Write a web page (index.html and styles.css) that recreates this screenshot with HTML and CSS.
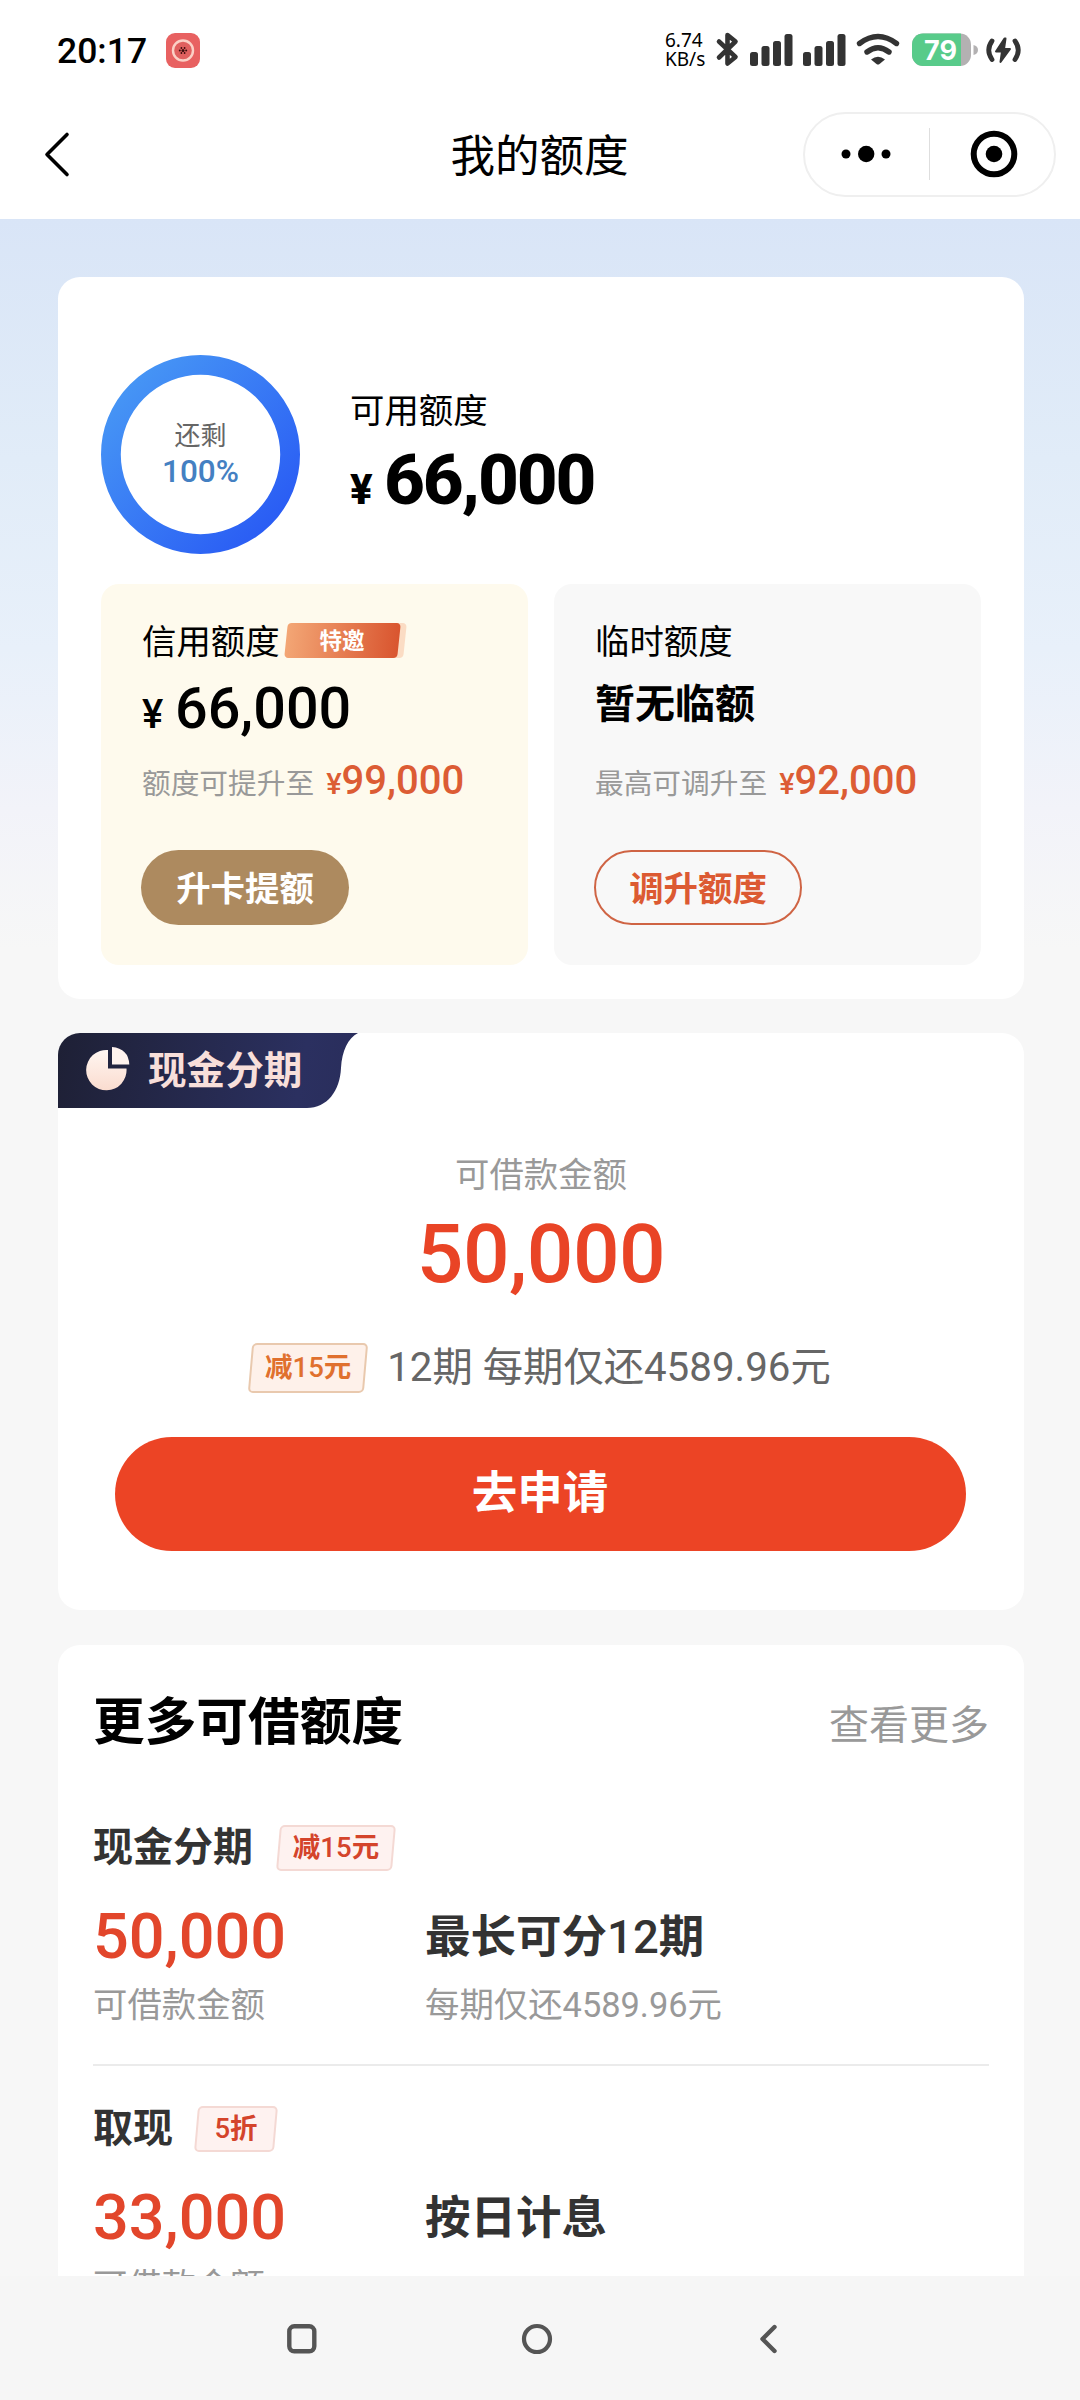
FILE: index.html
```html
<!DOCTYPE html>
<html lang="zh-CN">
<head>
<meta charset="utf-8">
<title>我的额度</title>
<link rel="stylesheet" href="styles.css">
</head>
<body>
<div class="phone">
  <header class="top">
    <div class="status">
      <span class="clock">20:17</span>
      <svg class="app-badge" width="34" height="35" viewBox="0 0 34 35">
        <rect width="34" height="35" rx="9" fill="#e86161"/>
        <circle cx="17" cy="17.5" r="10" fill="#e0605f" stroke="#fbd0c6" stroke-width="2.4"/>
        <g fill="#3a0d0d"><circle cx="17" cy="17.5" r="1.5"/><circle cx="13.8" cy="17.5" r="1"/><circle cx="20.2" cy="17.5" r="1"/><circle cx="15.4" cy="15" r=".9"/><circle cx="18.6" cy="15" r=".9"/><circle cx="15.4" cy="20" r=".9"/><circle cx="18.6" cy="20" r=".9"/></g>
      </svg>
      <div class="net"><span>6.74</span><span>KB/s</span></div>
      <svg class="sys" width="310" height="40" viewBox="714 29 310 40">
        <path d="M719 41.500L735.500 57L727.500 63.500V35L735.500 41.500L719 57.500" fill="none" stroke="#333" stroke-width="4.600" stroke-linecap="round" stroke-linejoin="round"/>
        <g fill="#333">
          <rect x="750" y="52" width="8" height="14" rx="2.500"/><rect x="761.500" y="46" width="8" height="20" rx="2.500"/><rect x="773" y="41" width="8" height="25" rx="2.500"/><rect x="784.500" y="34" width="8" height="32" rx="2.500"/>
          <rect x="803" y="52" width="8" height="14" rx="2.500"/><rect x="814.500" y="46" width="8" height="20" rx="2.500"/><rect x="826" y="41" width="8" height="25" rx="2.500"/><rect x="837.500" y="34" width="8" height="32" rx="2.500"/>
          <path d="M871 59.500Q878 54 885 59.500L879.500 64Q878 65 876.500 64Z"/>
        </g>
        <g fill="none" stroke="#333" stroke-width="5.400" stroke-linecap="round"><path d="M859.500 43.500Q878 29.500 896.500 43.500"/><path d="M867 52Q878 43.500 889 52"/></g>
        <clipPath id="cell"><rect x="912" y="33.500" width="59" height="32.500" rx="11"/></clipPath>
        <g clip-path="url(#cell)"><rect x="912" y="33" width="59" height="34" fill="#b3b1b2"/><rect x="912" y="33" width="49" height="34" fill="#58cb8a"/></g>
        <path d="M973.500 45Q978 46 978 50T973.500 55Z" fill="#b3b1b2"/>
        <text x="940.500" y="59.500" text-anchor="middle" class="pct">79</text>
        <path d="M1004.500 38.500L996 51.500H1002L1000.500 62L1010 49H1004L1005.500 38.500Z" fill="#333" stroke="#333" stroke-width="2" stroke-linejoin="round"/>
        <path d="M992 41Q985.500 50 992 59.500M1015 41Q1021.500 50 1015 59.500" fill="none" stroke="#333" stroke-width="4.800" stroke-linecap="round"/>
      </svg>
    </div>
    <div class="titlebar">
      <svg class="back" width="30" height="48" viewBox="43 130 30 48"><path d="M68 134.500L48 154.500L68 174.500" fill="none" stroke="#000" stroke-width="3.600" stroke-linecap="round" stroke-linejoin="round"/></svg>
      <h1 class="title">我的额度</h1>
      <div class="capsule">
        <svg width="50" height="20" viewBox="0 0 50 20"><circle cx="5" cy="10" r="4.500"/><circle cx="25.200" cy="10" r="8.200"/><circle cx="45" cy="10" r="4.500"/></svg>
        <i class="bar"></i>
        <svg width="48" height="48" viewBox="0 0 48 48"><circle cx="24" cy="24" r="20.300" fill="none" stroke="#000" stroke-width="6"/><circle cx="24" cy="24" r="8.300"/></svg>
      </div>
    </div>
  </header>

  <main class="content">
    <section class="card quota">
      <div class="overview">
        <div class="ring">
          <svg class="ring-art" width="199" height="199" viewBox="0 0 199 199">
            <defs><linearGradient id="blue" x1="0" y1=".15" x2=".9" y2="1"><stop offset="0" stop-color="#4797f5"/><stop offset="1" stop-color="#2859f4"/></linearGradient></defs>
            <circle cx="99.500" cy="99.500" r="89.600" fill="none" stroke="url(#blue)" stroke-width="19.800"/>
          </svg>
          <span class="ring-label">还剩</span>
          <span class="ring-value">100%</span>
        </div>
        <div class="available">
          <div class="label">可用额度</div>
          <div class="total"><span class="yen">¥</span><strong>66,000</strong></div>
        </div>
      </div>
      <div class="limits">
        <div class="limit gold">
          <div class="label">信用额度<span class="ribbon"><b>特邀</b></span></div>
          <div class="sum"><span class="yen">¥</span>66,000</div>
          <div class="raise">额度可提升至<span class="yen">¥</span><em>99,000</em></div>
          <button class="pill solid">升卡提额</button>
        </div>
        <div class="limit grey">
          <div class="label">临时额度</div>
          <div class="none">暂无临额</div>
          <div class="raise">最高可调升至<span class="yen">¥</span><em>92,000</em></div>
          <button class="pill line">调升额度</button>
        </div>
      </div>
    </section>

    <section class="card cash">
      <div class="tab">
        <svg width="44" height="44" viewBox="0 0 44 44">
          <defs><linearGradient id="rose" x1="0" y1="0" x2="0" y2="1"><stop offset="0" stop-color="#fff6f1"/><stop offset="1" stop-color="#fadccf"/></linearGradient></defs>
          <path d="M22 3V21.500H40.500A20.200 20.200 0 1 1 22 3Z" fill="url(#rose)"/>
          <path d="M26 0Q42.500 1.500 43.300 17.500H26Z" fill="#fff3ee"/>
        </svg>
        <span>现金分期</span>
      </div>
      <div class="cash-label">可借款金额</div>
      <div class="cash-sum">50,000</div>
      <div class="plan"><span class="coupon amber">减<i>15</i>元</span><span>12期 每期仅还4589.96元</span></div>
      <button class="apply">去申请</button>
    </section>

    <section class="card more">
      <div class="more-head"><h2>更多可借额度</h2><a class="see">查看更多</a></div>
      <article class="offer">
        <div class="offer-name">现金分期<span class="coupon">减<i>15</i>元</span></div>
        <div class="offer-main"><span class="offer-sum">50,000</span><span class="offer-term">最长可分<i>12</i>期</span></div>
        <div class="offer-note"><span>可借款金额</span><span>每期仅还4589.96元</span></div>
      </article>
      <article class="offer">
        <div class="offer-name">取现<span class="coupon short"><i>5</i>折</span></div>
        <div class="offer-main"><span class="offer-sum">33,000</span><span class="offer-term">按日计息</span></div>
        <div class="offer-note"><span>可借款金额</span></div>
      </article>
    </section>
  </main>

  <nav class="nav">
    <svg width="30" height="30" viewBox="0 0 30 30"><rect x="2.300" y="2.300" width="25" height="25" rx="5" fill="none" stroke="#555" stroke-width="4.400"/></svg>
    <svg width="32" height="32" viewBox="0 0 32 32"><circle cx="16" cy="16" r="13" fill="none" stroke="#555" stroke-width="4.200"/></svg>
    <svg width="20" height="30" viewBox="0 0 20 30"><path d="M15.500 3L3.500 15L15.500 27" fill="none" stroke="#555" stroke-width="4.400" stroke-linecap="round" stroke-linejoin="round"/></svg>
  </nav>
</div>
</body>
</html>
```

FILE: styles.css
```css
* { box-sizing: border-box; }
body { margin: 0; font-family: Roboto, "Noto Sans CJK SC", sans-serif; color: #000; }
h1, h2 { margin: 0; }
em, i { font-style: normal; }
button { font-family: inherit; border: 0; margin: 0; padding: 0; display: block; }
svg { display: block; flex: none; }

.phone { width: 1080px; height: 2400px; display: flex; flex-direction: column; overflow: hidden; background: #f7f7f7; }

.top { height: 219px; flex: none; background: #fff; }
.status { height: 98px; padding: 0 56px 0 57px; display: flex; align-items: flex-start; }
.clock { font-size: 35.500px; font-weight: 500; line-height: 40px; margin-top: 31px; width: 109px; }
.app-badge { margin-top: 33px; }
.net { margin: 31px 0 0 465px; width: 49px; display: flex; flex-direction: column; font-size: 19px; line-height: 19px; font-family: "Noto Sans", sans-serif; }
.sys { margin-top: 29px; }
.pct { font: 700 27px Inter, sans-serif; fill: #fff; }

.titlebar { height: 112px; padding: 0 24px 0 42px; display: grid; grid-template-columns: 1fr auto 1fr; align-items: center; }
.title { font-size: 44.500px; font-weight: 400; line-height: 56px; margin-left: -19px; margin-top: 5px; }
.capsule { justify-self: end; width: 253px; height: 85px; border: 2px solid #efefef; border-radius: 43px; display: flex; align-items: center; padding: 0 33px 0 36px; }
.bar { width: 1px; height: 52px; background: #dedede; margin: 0 40px 0 38px; }

.content { flex: 1; min-height: 0; overflow: hidden; padding: 58px 56px 0 58px; background: linear-gradient(#d9e5f7 0, #e1ecf8 240px, #e8f0fa 430px, #f2f3f9 590px, #f7f7f7 730px); }
.card { background: #fff; border-radius: 22px; }

.quota { height: 722px; padding: 78px 43px 0; }
.overview { display: flex; gap: 50px; }
.ring { position: relative; width: 199px; height: 199px; display: flex; flex-direction: column; align-items: center; justify-content: center; line-height: 35px; padding-bottom: 1px; }
.ring-art { position: absolute; left: 0; top: 0; }
.ring-label { font-size: 26px; color: #666; }
.ring-value { font-size: 31.500px; font-weight: 500; color: #4480c2; }
.available { padding-top: 36px; }
.label { font-size: 34.400px; line-height: 40px; }
.total { margin-top: 13px; display: flex; align-items: baseline; }
.total .yen { font-size: 42px; line-height: 42px; width: 34px; font-weight: 800; }
.total strong { font-size: 71px; line-height: 72px; letter-spacing: -2.100px; font-weight: 800; }

.limits { margin-top: 30px; display: flex; justify-content: space-between; }
.limit { width: 427px; height: 381px; border-radius: 18px; padding: 38px 0 0 40px; }
.label, .sum, .none, .raise { margin-left: 1px; }
.available .label { margin-left: 0; }
.gold { background: #fefaed; }
.grey { background: #f8f8f8; }
.gold .label { display: flex; align-items: center; }
.ribbon { position: relative; z-index: 0; margin-left: 6px; width: 113px; height: 35px; display: flex; align-items: center; justify-content: center; font-size: 22.500px; line-height: 32px; color: #fff; margin-top: -3px; }
.ribbon::before, .ribbon::after { content: ""; position: absolute; inset: 0; border-radius: 4px; transform: skewX(-6deg); }
.ribbon::before { background: #fbdcc4; left: 8px; right: -6px; z-index: -2; }
.ribbon::after { background: linear-gradient(90deg, #f3a675, #d9552f); z-index: -1; }
.sum { margin-top: 17px; display: flex; align-items: baseline; font-size: 57.500px; line-height: 60px; font-weight: 500; }
.sum .yen { font-size: 40px; line-height: 40px; width: 33px; }
.none { margin-top: 18px; height: 59px; font-size: 40px; line-height: 50px; font-weight: 700; }
.raise { margin-top: 22px; height: 40px; display: flex; align-items: baseline; font-size: 28.700px; line-height: 40px; color: #999; }
.raise .yen { font-size: 29px; font-weight: 500; margin-left: 12px; color: #dc5c34; }
.raise em { font-size: 40px; font-weight: 500; color: #dc5c34; }
.pill { margin-top: 49px; width: 208px; height: 75px; border-radius: 38px; font-size: 34.400px; line-height: 40px; font-weight: 700; padding-top: 3px; }
.solid { background: #ad8a5f; color: #fff; }
.line { border: 2px solid #cf6444; background: none; color: #dc5a32; }

.cash { margin-top: 34px; height: 577px; overflow: hidden; display: flex; flex-direction: column; align-items: center; }
.tab { align-self: flex-start; width: 300px; height: 75px; flex: none; display: flex; align-items: center; gap: 18px; padding-left: 28px; color: #f8dfda; font-size: 38.600px; line-height: 44px; font-weight: 700; background: linear-gradient(100deg, #1e2035, #2b3060 80%, #292d5b); clip-path: path("M0 0H300C290 5 284 18 283 35C282 58 269 75 249 75H0Z"); }
.tab svg { margin-top: -3px; }
.cash-label { margin-top: 45px; font-size: 34.400px; line-height: 44px; color: #999; }
.cash-sum { margin-top: 15px; font-size: 82px; line-height: 84px; font-weight: 500; color: #e94426; letter-spacing: -.500px; }
.plan { margin-top: 47px; height: 50px; display: flex; align-items: center; gap: 19px; font-size: 40.300px; line-height: 50px; color: #666; margin-left: -3px; }
.coupon { position: relative; z-index: 0; width: 120px; height: 46px; display: inline-flex; align-items: center; justify-content: center; font-size: 27.500px; line-height: 40px; padding-bottom: 1px; font-weight: 700; color: #d4442b; }
.coupon i, .offer-term i { font-weight: 500; }
.coupon::before { content: ""; position: absolute; inset: 0 2px; z-index: -1; border: 2px solid #f4d9d4; border-radius: 5px; background: #fef2f0; transform: skewX(-5deg); }
.coupon.amber { height: 50px; color: #e0702e; }
.coupon.amber::before { border-color: #e9c9ae; background: #fef1ea; }
.coupon.short { width: 84px; margin-left: -2px; }
.apply { margin: 44px 2px 0 0; width: 851px; height: 114px; border-radius: 57px; background: #ec4425; color: #fff; font-size: 45.500px; line-height: 60px; font-weight: 700; }

.more { margin-top: 35px; height: 800px; padding: 48px 35px 0 35px; }
.more-head { display: flex; justify-content: space-between; align-items: center; height: 60px; }
h2 { font-size: 51.700px; font-weight: 700; line-height: 60px; }
.see { font-size: 40px; line-height: 50px; color: #999; margin-top: 5px; }
.offer { height: 281px; padding-top: 40px; }
.more-head + .offer { margin-top: 32px; border-bottom: 2px solid #ebebeb; }
.offer-name { height: 46px; display: flex; align-items: center; gap: 23px; font-size: 40px; line-height: 46px; font-weight: 700; color: #333; }
.offer-main { margin-top: 36px; display: grid; grid-template-columns: 332px 1fr; line-height: 60px; }
.offer-sum { font-size: 63px; font-weight: 500; color: #e2462b; }
.offer-term { font-size: 45.500px; font-weight: 700; color: #333; padding-top: 1px; height: 60px; }
.offer-note { margin-top: 18px; display: grid; grid-template-columns: 332px 1fr; font-size: 34.400px; line-height: 40px; color: #999; }

.nav { height: 124px; flex: none; background: #f6f6f6; display: grid; grid-template-columns: 30px 32px 20px; column-gap: 204px; justify-content: start; padding: 2px 0 0 287px; align-items: center; }
.nav svg:last-child { margin-left: 2px; }
```
